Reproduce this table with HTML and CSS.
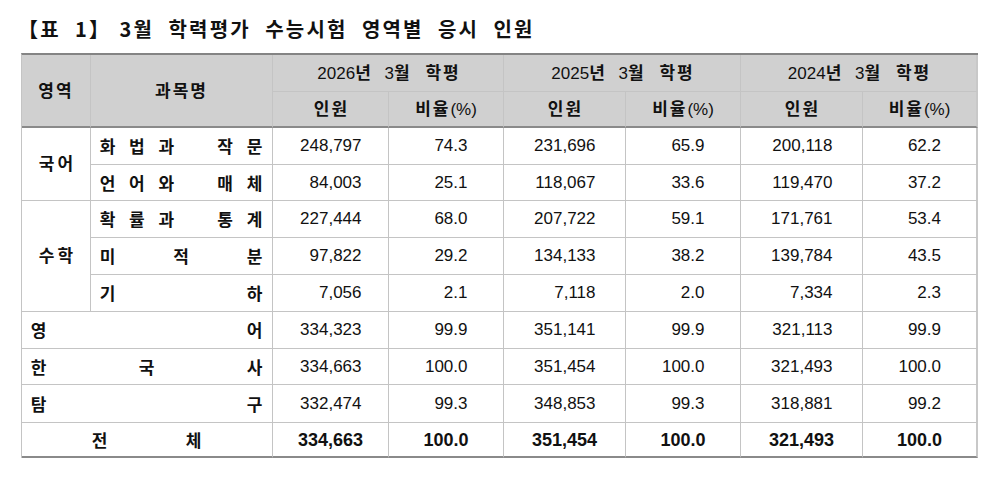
FILE: index.html
```html
<!DOCTYPE html>
<html lang="ko">
<head>
<meta charset="utf-8">
<title>3월 학력평가 수능시험 영역별 응시 인원</title>
<link rel="stylesheet" href="styles.css">
</head>
<body>
<div class="page">
  <h1 class="title"><span class="tag">【표 1】</span> 3월 학력평가 수능시험 영역별 응시 인원</h1>
  <table class="tbl">
    <colgroup>
      <col class="c-area"><col class="c-subj"><col class="c-n1"><col class="c-p">
      <col class="c-n"><col class="c-p"><col class="c-n"><col class="c-p">
    </colgroup>
    <thead>
      <tr class="hr1">
        <th rowspan="2"><span class="k">영역</span></th>
        <th rowspan="2"><span class="k">과목명</span></th>
        <th colspan="2" class="year">2026<span class="k">년</span> 3<span class="k end">월 학평</span></th>
        <th colspan="2" class="year">2025<span class="k">년</span> 3<span class="k end">월 학평</span></th>
        <th colspan="2" class="year">2024<span class="k">년</span> 3<span class="k end">월 학평</span></th>
      </tr>
      <tr class="hr2">
        <th><span class="k end">인원</span></th><th><span class="k">비율</span>(%)</th>
        <th><span class="k end">인원</span></th><th><span class="k">비율</span>(%)</th>
        <th><span class="k end">인원</span></th><th><span class="k">비율</span>(%)</th>
      </tr>
    </thead>
    <tbody>
      <tr>
        <td rowspan="2" class="area"><span class="k">국어</span></td>
        <td class="subj"><span class="dist"><i>화</i><i>법</i><i>과</i><i></i><i>작</i><i>문</i></span></td>
        <td class="num"><span class="n">248,797</span></td><td class="num"><span class="p">74.3</span></td>
        <td class="num"><span class="n">231,696</span></td><td class="num"><span class="p">65.9</span></td>
        <td class="num"><span class="n">200,118</span></td><td class="num"><span class="p">62.2</span></td>
      </tr>
      <tr class="short">
        <td class="subj"><span class="dist"><i>언</i><i>어</i><i>와</i><i></i><i>매</i><i>체</i></span></td>
        <td class="num"><span class="n">84,003</span></td><td class="num"><span class="p">25.1</span></td>
        <td class="num"><span class="n">118,067</span></td><td class="num"><span class="p">33.6</span></td>
        <td class="num"><span class="n">119,470</span></td><td class="num"><span class="p">37.2</span></td>
      </tr>
      <tr>
        <td rowspan="3" class="area"><span class="k">수학</span></td>
        <td class="subj"><span class="dist"><i>확</i><i>률</i><i>과</i><i></i><i>통</i><i>계</i></span></td>
        <td class="num"><span class="n">227,444</span></td><td class="num"><span class="p">68.0</span></td>
        <td class="num"><span class="n">207,722</span></td><td class="num"><span class="p">59.1</span></td>
        <td class="num"><span class="n">171,761</span></td><td class="num"><span class="p">53.4</span></td>
      </tr>
      <tr>
        <td class="subj"><span class="dist"><i>미</i><i>적</i><i>분</i></span></td>
        <td class="num"><span class="n">97,822</span></td><td class="num"><span class="p">29.2</span></td>
        <td class="num"><span class="n">134,133</span></td><td class="num"><span class="p">38.2</span></td>
        <td class="num"><span class="n">139,784</span></td><td class="num"><span class="p">43.5</span></td>
      </tr>
      <tr>
        <td class="subj"><span class="dist"><i>기</i><i>하</i></span></td>
        <td class="num"><span class="n">7,056</span></td><td class="num"><span class="p">2.1</span></td>
        <td class="num"><span class="n">7,118</span></td><td class="num"><span class="p">2.0</span></td>
        <td class="num"><span class="n">7,334</span></td><td class="num"><span class="p">2.3</span></td>
      </tr>
      <tr>
        <td colspan="2" class="wide"><span class="dist"><i>영</i><i>어</i></span></td>
        <td class="num"><span class="n">334,323</span></td><td class="num"><span class="p">99.9</span></td>
        <td class="num"><span class="n">351,141</span></td><td class="num"><span class="p">99.9</span></td>
        <td class="num"><span class="n">321,113</span></td><td class="num"><span class="p">99.9</span></td>
      </tr>
      <tr class="short">
        <td colspan="2" class="wide"><span class="dist"><i>한</i><i>국</i><i>사</i></span></td>
        <td class="num"><span class="n">334,663</span></td><td class="num"><span class="p">100.0</span></td>
        <td class="num"><span class="n">351,454</span></td><td class="num"><span class="p">100.0</span></td>
        <td class="num"><span class="n">321,493</span></td><td class="num"><span class="p">100.0</span></td>
      </tr>
      <tr class="tall">
        <td colspan="2" class="wide"><span class="dist"><i>탐</i><i>구</i></span></td>
        <td class="num"><span class="n">332,474</span></td><td class="num"><span class="p">99.3</span></td>
        <td class="num"><span class="n">348,853</span></td><td class="num"><span class="p">99.3</span></td>
        <td class="num"><span class="n">318,881</span></td><td class="num"><span class="p">99.2</span></td>
      </tr>
      <tr class="total">
        <td colspan="2" class="wide"><span class="pair"><i>전</i><i>체</i></span></td>
        <td class="num">334,663</td><td class="num">100.0</td>
        <td class="num">351,454</td><td class="num">100.0</td>
        <td class="num">321,493</td><td class="num">100.0</td>
      </tr>
    </tbody>
  </table>
</div>
</body>
</html>
```

FILE: styles.css
```css
html, body {
  margin: 0;
  padding: 0;
  background: #ffffff;
}

body {
  font-family: "Liberation Sans", "Noto Sans CJK KR", sans-serif;
  color: #111111;
}

.page {
  padding: 16px 0 0 21px;
}

.title {
  margin: 0 0 11px -3px;
  font-family: "Noto Sans CJK KR", sans-serif;
  font-size: 20px;
  line-height: 26px;
  font-weight: 700;
  letter-spacing: 2.2px;
  word-spacing: 6.5px;
  color: #111111;
}

.title .tag {
  margin-right: -6px;
}

.tbl {
  border-collapse: separate;
  border-spacing: 0;
  table-layout: fixed;
  width: 957px;
  border-top: 2px solid #848484;
  border-left: 1px solid #c4c4c4;
  box-shadow: 0 1px 0 #d4d4d4;
  font-size: 17px;
}

.c-area { width: 69px; }
.c-subj { width: 182px; }
.c-n1 { width: 116px; }
.c-n { width: 122px; }
.c-p { width: 115px; }

.tbl th,
.tbl td {
  padding: 0;
  border-right: 1px solid #c4c4c4;
  border-bottom: 1px solid #c4c4c4;
  text-align: center;
  vertical-align: middle;
  line-height: 20px;
}

.tbl th:last-child,
.tbl td:last-child {
  border-right: 2px solid #c8c8c8;
}

.tbl th {
  background: #d0d0d0;
  font-weight: 400;
}

.tbl th.year {
  word-spacing: 7px;
}

.hr1 { height: 37px; }
.hr2 { height: 36px; }
.hr2 th,
.hr1 th[rowspan] {
  border-bottom: 2px solid #8a8a8a;
}

.k {
  font-family: "Noto Sans CJK KR", sans-serif;
  font-weight: 700;
  letter-spacing: 2px;
}

.k.end {
  margin-right: -2px;
}

tbody tr { height: 37px; }
tbody tr.short { height: 36px; }
tbody tr.tall { height: 38px; }
tbody tr.total { height: 35px; }

.area .k {
  letter-spacing: 3px;
  margin-right: -3px;
}

.dist {
  display: flex;
  justify-content: space-between;
  font-family: "Noto Sans CJK KR", sans-serif;
  font-weight: 700;
}

.dist i,
.pair i {
  font-style: normal;
  width: 17px;
  text-align: center;
}

.subj,
.wide {
  padding: 0 9px 0 8px !important;
}

.pair {
  display: flex;
  justify-content: center;
  gap: 77px;
  font-family: "Noto Sans CJK KR", sans-serif;
  font-weight: 700;
}

.num .n {
  display: inline-block;
  width: 62px;
  text-align: right;
}

.num .p {
  display: inline-block;
  width: 43px;
  text-align: right;
}

.total td {
  border-bottom: 2px solid #8a8a8a;
}

.total .num {
  font-size: 18px;
  font-weight: 700;
}
```
